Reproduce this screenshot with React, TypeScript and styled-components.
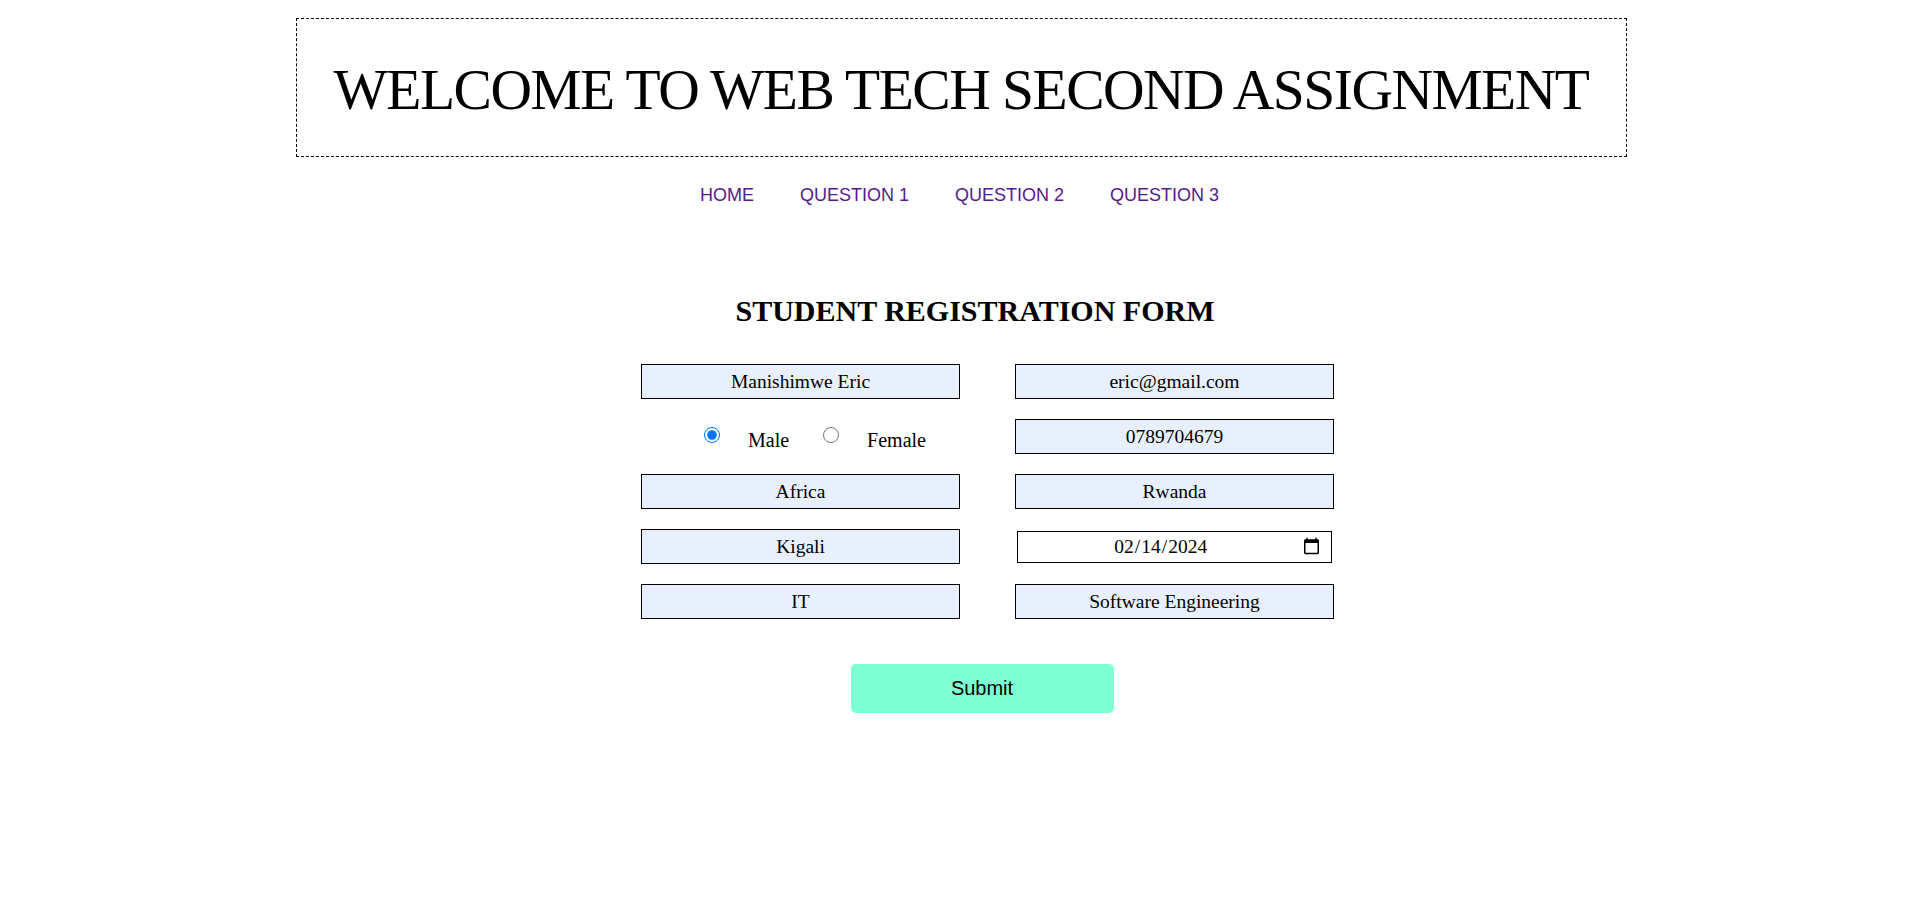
import React from "react";
import styled, { createGlobalStyle } from "styled-components";

const GlobalStyle = createGlobalStyle`
  html, body { background: #ffffff; }
  body {
    margin: 8px;
    font-family: "Liberation Serif", "Times New Roman", serif;
    color: #000;
  }
`;

const Banner = styled.header`
  box-sizing: border-box;
  width: 1331px;
  height: 139px;
  margin: 10px 0 0 calc(50% - 664px);
  border: 1px dashed #000;
  display: flex;
  align-items: center;
  justify-content: center;
  padding-top: 3px;
`;

const BannerTitle = styled.h1`
  margin: 0;
  font-family: "Liberation Serif", "Times New Roman", serif;
  font-weight: 400;
  font-size: 57.5px;
  letter-spacing: -1.5px;
  white-space: nowrap;
`;

const Nav = styled.nav`
  display: flex;
  justify-content: center;
  gap: 46px;
  margin-top: 28px;
`;

const NavLink = styled.a`
  font-family: "Liberation Sans", Arial, sans-serif;
  font-size: 18px;
  color: #551a8b;
  text-decoration: none;
`;

const FormArea = styled.form`
  display: flex;
  flex-direction: column;
  align-items: center;
  padding-left: 56px;
  margin-top: 88px;
`;

const FormTitle = styled.h2`
  margin: 0 25px 0 0;
  font-family: "Liberation Serif", "Times New Roman", serif;
  font-weight: 700;
  font-size: 30px;
`;

const FieldGrid = styled.div`
  margin-top: 36px;
  display: grid;
  grid-template-columns: 319px 319px;
  column-gap: 55px;
  row-gap: 20px;
`;

const Cell = styled.div`
  height: 35px;
  display: flex;
  align-items: center;
  justify-content: center;
`;

const TextField = styled.input`
  box-sizing: border-box;
  width: 319px;
  height: 35px;
  margin: 0;
  padding: 0 4px;
  border: 1px solid #000;
  background: #e8f0fe;
  color: #000;
  font-family: "Liberation Serif", "Times New Roman", serif;
  font-size: 19.5px;
  text-align: center;
  outline: none;
`;

const DateField = styled(TextField)`
  width: 315px;
  height: 32px;
  background: #ffffff;
  padding: 0 8px 0 4px;
`;

const RadioCell = styled.div`
  height: 35px;
  display: flex;
  align-items: center;
  padding-left: 63px;
`;

const Radio = styled.input`
  width: 16px;
  height: 16px;
  margin: 0 0 3px 0;
  accent-color: #0075ff;
`;

const RadioLabel = styled.label<{ $after?: number }>`
  font-family: "Liberation Serif", "Times New Roman", serif;
  font-size: 20px;
  padding-top: 7px;
  margin-left: 28px;
  margin-right: ${(p) => p.$after ?? 0}px;
`;

const SubmitButton = styled.button`
  margin: 45px 11px 0 0;
  width: 263px;
  height: 49px;
  border: none;
  border-radius: 5px;
  background: #7fffd4;
  color: #000;
  font-family: "Liberation Sans", Arial, sans-serif;
  font-size: 20px;
  cursor: pointer;
`;

const links = ["HOME", "QUESTION 1", "QUESTION 2", "QUESTION 3"];

export default function App() {
  return (
    <>
      <GlobalStyle />
      <Banner>
        <BannerTitle>WELCOME TO WEB TECH SECOND ASSIGNMENT</BannerTitle>
      </Banner>
      <Nav>
        {links.map((l) => (
          <NavLink key={l} href="#">
            {l}
          </NavLink>
        ))}
      </Nav>
      <FormArea onSubmit={(e) => e.preventDefault()}>
        <FormTitle>STUDENT REGISTRATION FORM</FormTitle>
        <FieldGrid>
          <Cell>
            <TextField type="text" defaultValue="Manishimwe Eric" />
          </Cell>
          <Cell>
            <TextField type="email" defaultValue="eric@gmail.com" />
          </Cell>
          <RadioCell>
            <Radio type="radio" name="gender" id="male" defaultChecked />
            <RadioLabel htmlFor="male" $after={34}>
              Male
            </RadioLabel>
            <Radio type="radio" name="gender" id="female" />
            <RadioLabel htmlFor="female">Female</RadioLabel>
          </RadioCell>
          <Cell>
            <TextField type="text" defaultValue="0789704679" />
          </Cell>
          <Cell>
            <TextField type="text" defaultValue="Africa" />
          </Cell>
          <Cell>
            <TextField type="text" defaultValue="Rwanda" />
          </Cell>
          <Cell>
            <TextField type="text" defaultValue="Kigali" />
          </Cell>
          <Cell>
            <DateField type="date" defaultValue="2024-02-14" />
          </Cell>
          <Cell>
            <TextField type="text" defaultValue="IT" />
          </Cell>
          <Cell>
            <TextField type="text" defaultValue="Software Engineering" />
          </Cell>
        </FieldGrid>
        <SubmitButton type="submit">Submit</SubmitButton>
      </FormArea>
    </>
  );
}
